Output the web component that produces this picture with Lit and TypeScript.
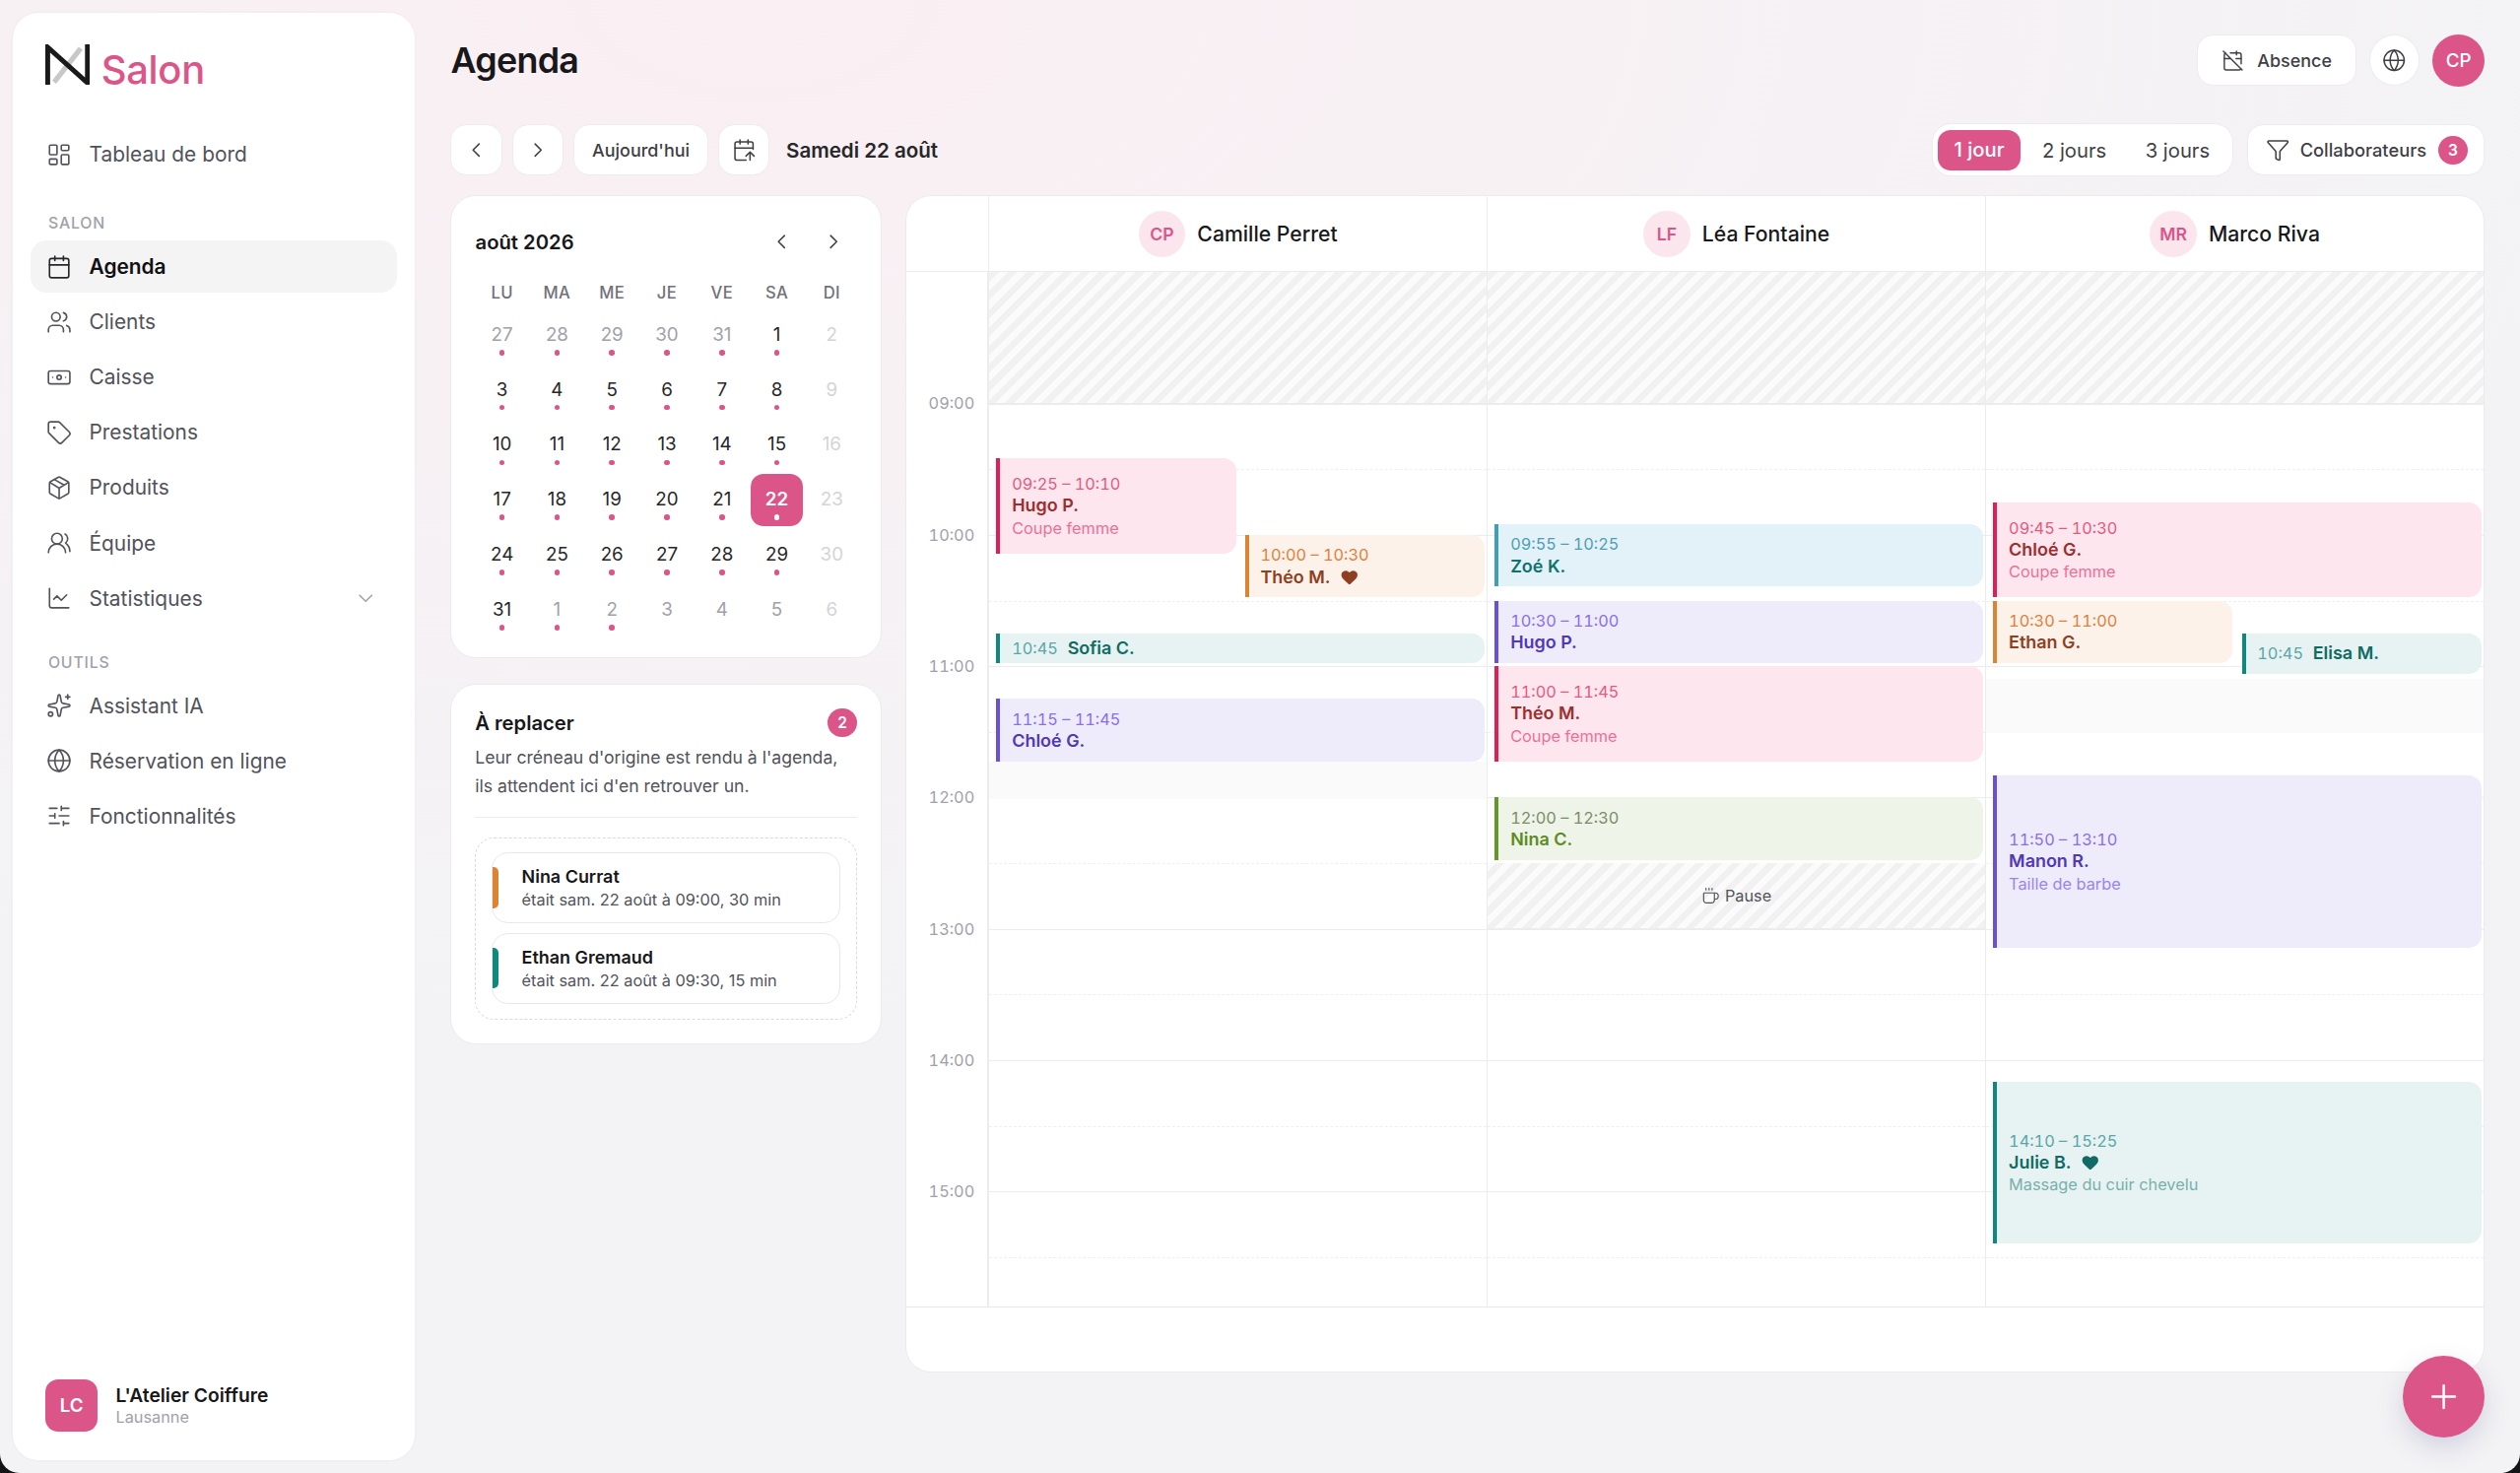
import { LitElement, html, css, svg } from "lit";
import { customElement } from "lit/decorators.js";

const ICONS: Record<string, any> = {
  dash: svg`<rect x="3" y="3" width="7" height="9" rx="1"/><rect x="14" y="3" width="7" height="5" rx="1"/><rect x="14" y="12" width="7" height="9" rx="1"/><rect x="3" y="16" width="7" height="5" rx="1"/>`,
  cal: svg`<path d="M8 2v4M16 2v4"/><rect x="3" y="4" width="18" height="18" rx="2"/><path d="M3 10h18"/>`,
  users: svg`<path d="M16 21v-2a4 4 0 0 0-4-4H6a4 4 0 0 0-4 4v2"/><circle cx="9" cy="7" r="4"/><path d="M22 21v-2a4 4 0 0 0-3-3.87M16 3.13a4 4 0 0 1 0 7.75"/>`,
  bank: svg`<rect x="2" y="6" width="20" height="12" rx="2"/><circle cx="12" cy="12" r="2"/><path d="M6 12h.01M18 12h.01"/>`,
  tag: svg`<path d="M12.586 2.586A2 2 0 0 0 11.172 2H4a2 2 0 0 0-2 2v7.172a2 2 0 0 0 .586 1.414l8.704 8.704a2.426 2.426 0 0 0 3.42 0l6.58-6.58a2.426 2.426 0 0 0 0-3.42z"/><circle cx="7.5" cy="7.5" r=".5"/>`,
  pkg: svg`<path d="M11 21.73a2 2 0 0 0 2 0l7-4A2 2 0 0 0 21 16V8a2 2 0 0 0-1-1.73l-7-4a2 2 0 0 0-2 0l-7 4A2 2 0 0 0 3 8v8a2 2 0 0 0 1 1.73z"/><path d="M12 22V12M3.3 7l7.703 4.734a2 2 0 0 0 1.994 0L20.7 7M7.5 4.27l9 5.15"/>`,
  team: svg`<path d="M18 21a8 8 0 0 0-16 0"/><circle cx="10" cy="8" r="5"/><path d="M22 20c0-3.37-2-6.5-4-8a5 5 0 0 0-.45-8.3"/>`,
  chart: svg`<path d="M3 3v16a2 2 0 0 0 2 2h16"/><path d="m19 9-5 5-4-4-3 3"/>`,
  spark: svg`<path d="M11.017 2.814a1 1 0 0 1 1.966 0l1.051 5.558a2 2 0 0 0 1.594 1.594l5.558 1.051a1 1 0 0 1 0 1.966l-5.558 1.051a2 2 0 0 0-1.594 1.594l-1.051 5.558a1 1 0 0 1-1.966 0l-1.051-5.558a2 2 0 0 0-1.594-1.594l-5.558-1.051a1 1 0 0 1 0-1.966l5.558-1.051a2 2 0 0 0 1.594-1.594z"/><path d="M20 2v4M22 4h-4"/><circle cx="4" cy="20" r="2"/>`,
  globe: svg`<circle cx="12" cy="12" r="10"/><path d="M12 2a14.5 14.5 0 0 0 0 20 14.5 14.5 0 0 0 0-20"/><path d="M2 12h20"/>`,
  sliders: svg`<path d="M10 5H3M12 19H3M14 3v4M16 17v4M21 12h-9M21 19h-5M21 5h-7M8 10v4M8 12H3"/>`,
  calOff: svg`<path d="M4.2 4.2A2 2 0 0 0 3 6v14a2 2 0 0 0 2 2h14a2 2 0 0 0 1.82-1.18"/><path d="M21 15.5V6a2 2 0 0 0-2-2H9.5"/><path d="M16 2v4M3 10h7M21 10h-5.5M2 2l20 20"/>`,
  calUp: svg`<path d="m14 18 4-4 4 4M16 2v4M18 22v-8"/><path d="M21 11.343V6a2 2 0 0 0-2-2H5a2 2 0 0 0-2 2v14a2 2 0 0 0 2 2h9"/><path d="M3 10h18M8 2v4"/>`,
  funnel: svg`<path d="M10 20a1 1 0 0 0 .553.895l2 1A1 1 0 0 0 14 21v-7a2 2 0 0 1 .517-1.341L21.74 4.67A1 1 0 0 0 21 3H3a1 1 0 0 0-.742 1.67l7.225 7.989A2 2 0 0 1 10 14z"/>`,
  coffee: svg`<path d="M10 2v2M14 2v2M6 2v2"/><path d="M16 8a1 1 0 0 1 1 1v8a4 4 0 0 1-4 4H7a4 4 0 0 1-4-4V9a1 1 0 0 1 1-1h14a4 4 0 1 1 0 8h-1"/>`,
  left: svg`<path d="m15 18-6-6 6-6"/>`,
  right: svg`<path d="m9 18 6-6-6-6"/>`,
  down: svg`<path d="m6 9 6 6 6-6"/>`,
  plus: svg`<path d="M5 12h14M12 5v14"/>`,
};
const icon = (n: string, size = 16, sw = 1.5) =>
  html`<svg class="ic" width=${size} height=${size} viewBox="0 0 24 24" fill="none" stroke="currentColor" stroke-width=${sw} stroke-linecap="round" stroke-linejoin="round">${ICONS[n]}</svg>`;
const heart = html`<svg class="heart" width="12" height="12" viewBox="0 0 24 24" fill="currentColor"><path d="M2 9.5a5.5 5.5 0 0 1 9.591-3.676.56.56 0 0 0 .818 0A5.49 5.49 0 0 1 22 9.5c0 2.29-1.5 4-3 5.5l-5.492 5.313a2 2 0 0 1-3 .019L5 15c-1.5-1.5-3-3.2-3-5.5"/></svg>`;

const PX_H = 81.7;
const Y0 = 8;
const yOf = (h: number, m: number) => (h + m / 60 - Y0) * PX_H;

type Ev = { c: string; s: [number, number]; e: [number, number]; lane?: 0 | 1 | 2; t: string; name: string; sub?: string; heart?: boolean; compact?: boolean };
const COLS: { ini: string; name: string; off: [number, number][]; pause?: boolean; evs: Ev[] }[] = [
  {
    ini: "CP", name: "Camille Perret", off: [[474, 497]],
    evs: [
      { c: "pink", s: [9, 25], e: [10, 10], lane: 1, t: "09:25 – 10:10", name: "Hugo P.", sub: "Coupe femme" },
      { c: "orange", s: [10, 0], e: [10, 30], lane: 2, t: "10:00 – 10:30", name: "Théo M.", heart: true },
      { c: "teal", s: [10, 45], e: [11, 0], t: "10:45", name: "Sofia C.", compact: true },
      { c: "violet", s: [11, 15], e: [11, 45], t: "11:15 – 11:45", name: "Chloé G." },
    ],
  },
  {
    ini: "LF", name: "Léa Fontaine", off: [], pause: true,
    evs: [
      { c: "blue", s: [9, 55], e: [10, 25], t: "09:55 – 10:25", name: "Zoé K." },
      { c: "violet", s: [10, 30], e: [11, 0], t: "10:30 – 11:00", name: "Hugo P." },
      { c: "pink", s: [11, 0], e: [11, 45], t: "11:00 – 11:45", name: "Théo M.", sub: "Coupe femme" },
      { c: "green", s: [12, 0], e: [12, 30], t: "12:00 – 12:30", name: "Nina C." },
    ],
  },
  {
    ini: "MR", name: "Marco Riva", off: [[422.5, 456]],
    evs: [
      { c: "pink", s: [9, 45], e: [10, 30], t: "09:45 – 10:30", name: "Chloé G.", sub: "Coupe femme" },
      { c: "orange", s: [10, 30], e: [11, 0], lane: 1, t: "10:30 – 11:00", name: "Ethan G." },
      { c: "teal", s: [10, 45], e: [11, 5], lane: 2, t: "10:45", name: "Elisa M.", compact: true },
      { c: "violet", s: [11, 50], e: [13, 10], t: "11:50 – 13:10", name: "Manon R.", sub: "Taille de barbe" },
      { c: "teal", s: [14, 10], e: [15, 25], t: "14:10 – 15:25", name: "Julie B.", sub: "Massage du cuir chevelu", heart: true },
    ],
  },
];

const NAV1: [string, string, boolean?][] = [
  ["cal", "Agenda", true], ["users", "Clients"], ["bank", "Caisse"], ["tag", "Prestations"], ["pkg", "Produits"], ["team", "Équipe"],
];
const NAV2: [string, string][] = [["spark", "Assistant IA"], ["globe", "Réservation en ligne"], ["sliders", "Fonctionnalités"]];

type Day = { d: number; k: "pre" | "cur" | "sun" | "sel" | "post"; dot: boolean };
const DAYS: Day[] = (() => {
  const out: Day[] = [];
  for (const d of [27, 28, 29, 30, 31]) out.push({ d, k: "pre", dot: true });
  for (let d = 1; d <= 31; d++) {
    const col = out.length % 7;
    if (col === 6) out.push({ d, k: "sun", dot: false });
    else out.push({ d, k: d === 22 ? "sel" : "cur", dot: true });
  }
  [1, 2, 3, 4, 5, 6].forEach((d, i) => out.push({ d, k: i === 5 ? "sun" : "post", dot: i < 2 }));
  return out;
})();

@customElement("app-root")
export class AppRoot extends LitElement {
  static styles = css`
    :host { display: block; width: 1568px; height: 916.4px; zoom: 1.63138; background: #141416; overflow: hidden;
      font-family: Inter, "Noto Sans", sans-serif; color: #18181b; }
    * { box-sizing: border-box; }
    .ic { flex: none; display: block; }
    .page { height: 100%; display: flex; gap: 22.4px; padding: 8px 22px 8px 8px; position: relative; border-radius: 0 0 12px 12px;
      background: radial-gradient(ellipse 75% 70% at 30% 0%, #faeff3 0%, #f7f1f4 45%, #f3f3f5 100%); overflow: hidden; }
    .side { width: 250px; flex: none; background: #fff; border-radius: 16px; display: flex; flex-direction: column; padding: 19.5px 11px 18px; box-shadow: 0 0 0 1px rgba(0,0,0,.015); }
    .logo { display: flex; align-items: flex-start; gap: 7px; padding-left: 9px; height: 27px; }
    .logo span { font-size: 24.5px; font-weight: 500; color: #dc5589; line-height: 29px; letter-spacing: -.2px; margin-top: 1.5px; }
    .nav { display: flex; flex-direction: column; gap: 2px; }
    .item { height: 32.4px; display: flex; align-items: center; gap: 10.5px; padding-left: 10px; padding-right: 12px; font-size: 12.8px; color: #52525b; border-radius: 10px; }
    .item.on { background: #f4f4f5; color: #111113; font-weight: 600; }
    .item.on .ic { color: #27272a; }
    .item .chev { margin-left: auto; color: #a1a1aa; }
    .nav.first { margin-top: 25.5px; }
    .lab { font-size: 9.7px; font-weight: 500; letter-spacing: .5px; color: #a1a1aa; padding-left: 11px; margin: 20.5px 0 4.8px; line-height: 12px; }
    .lab.b { margin-top: 18px; margin-bottom: 4.5px; }
    .foot { margin-top: auto; display: flex; align-items: center; gap: 11px; padding-left: 9px; }
    .av { width: 33px; height: 32px; border-radius: 8px; background: #dc5589; color: #fff; font-size: 11.5px; font-weight: 600; display: flex; align-items: center; justify-content: center; }
    .foot b { display: block; font-size: 11.8px; font-weight: 600; line-height: 15px; color: #18181b; }
    .foot small { display: block; font-size: 10px; color: #a1a1aa; line-height: 13px; }

    .main { flex: 1; min-width: 0; display: flex; flex-direction: column; }
    .top { display: flex; align-items: center; height: 46px; margin-top: 6.6px; }
    h1 { margin: 0; font-size: 22px; font-weight: 600; letter-spacing: -.45px; color: #18181b; }
    .top .sp { flex: 1; }
    .btn { height: 32px; background: #fff; border: 1px solid #ececef; border-radius: 10px; display: flex; align-items: center; justify-content: center; color: #3f3f46; font-size: 11px; font-weight: 500; }
    .sq { width: 32px; }
    .abs { width: 99.5px; gap: 8px; margin-right: 8px; }
    .glob { width: 31px; border-radius: 50%; margin-right: 8px; }
    .me { width: 32.6px; height: 32.6px; border-radius: 50%; background: #dc5589; color: #fff; font-size: 11.5px; font-weight: 500; display: flex; align-items: center; justify-content: center; }
    .bar { display: flex; align-items: center; gap: 6.2px; margin-top: 16.7px; height: 32px; }
    .today { width: 84px; }
    .date { margin-left: 4px; font-size: 12.6px; font-weight: 600; color: #27272a; }
    .seg { margin-left: auto; height: 33px; background: #fff; border: 1px solid #ececef; border-radius: 12px; display: flex; align-items: center; padding: 0 3px; width: 188px; margin-right: 2px; }
    .seg span { font-size: 12.4px; font-weight: 400; color: #3f3f46; text-align: center; }
    .seg .on { width: 52px; height: 25.3px; line-height: 25px; background: #dc5589; color: #fff; border-radius: 8px; font-weight: 500; }
    .seg .o { width: 66.5px; } .seg .o2 { width: 62px; }
    .coll { width: 148px; gap: 6.5px; justify-content: flex-start; padding-left: 11px; font-size: 11.2px; }
    .badge { width: 18px; height: 18px; border-radius: 50%; background: #dc5589; color: #fff; font-size: 9.5px; font-weight: 600; display: flex; align-items: center; justify-content: center; flex: none; }
    .coll .badge { margin-left: 1px; }

    .body { flex: 1; display: flex; gap: 15.2px; margin-top: 12.1px; min-height: 0; margin-bottom: 54.6px; }
    .left { width: 268px; flex: none; display: flex; flex-direction: column; gap: 16px; }
    .card { background: #fff; border: 1px solid #ebebee; border-radius: 16px; }
    .mini { height: 288.2px; padding: 0 14.3px; }
    .mh { display: flex; align-items: center; height: 53.5px; padding-left: .5px; padding-top: 3.5px; font-size: 12.4px; font-weight: 600; }
    .mh .sp { flex: 1; }
    .mh .a { color: #3f3f46; margin-right: 17px; }
    .mh .a2 { color: #3f3f46; margin-right: 7.5px; }
    .wd, .gr { display: grid; grid-template-columns: repeat(7, 34.2px); }
    .wd span { text-align: center; font-size: 10.2px; font-weight: 500; color: #71717a; line-height: 14px; letter-spacing: .2px; }
    .gr { margin-top: 2px; grid-auto-rows: 34.2px; }
    .d { position: relative; width: 32.4px; height: 32px; margin: 1px auto 0; display: flex; align-items: center; justify-content: center; font-size: 11.5px; line-height: 1; border-radius: 8px; color: #27272a; }
    .d.pre, .d.post { color: #a1a1aa; }
    .d.sun { color: #d4d4d8; }
    .d.sel { background: #dc5589; color: #fff; font-weight: 600; }
    .d i { position: absolute; left: 50%; bottom: 3.4px; margin-left: -1.7px; width: 3.4px; height: 3.4px; border-radius: 50%; background: #dc5589; }
    .d.sel i { background: #fff; }
    .rep { height: 224px; padding: 0 14.6px; }
    .rh { display: flex; align-items: center; justify-content: space-between; margin-top: 14.4px; height: 18px; font-size: 12.4px; font-weight: 600; }
    .rd { margin: 4.2px 0 0; font-size: 10.8px; line-height: 17.6px; color: #52525b; padding-bottom: 10px; border-bottom: 1px solid #ececef; }
    .drop { margin-top: 12.4px; height: 113.4px; border: 1px dashed #d9d9de; border-radius: 12px; padding: 8.8px 9.5px; display: flex; flex-direction: column; gap: 6px; }
    .ri { position: relative; height: 44px; border: 1px solid #e8e8eb; border-radius: 10px; padding-left: 18.3px; display: flex; flex-direction: column; justify-content: center; }
    .ri i { position: absolute; left: 0; top: 8.4px; width: 4px; height: 25.5px; border-radius: 0 3px 3px 0; }
    .ri b { font-size: 11px; font-weight: 600; line-height: 15.5px; color: #18181b; }
    .ri small { font-size: 10px; line-height: 14px; color: #52525b; }

    .grid { flex: 1; min-width: 0; position: relative; overflow: hidden; display: flex; flex-direction: column; }
    .hrow { display: flex; height: 47.4px; flex: none; border-bottom: 1px solid #ececef; }
    .tc { width: 50.8px; flex: none; }
    .hrow > div + div { border-left: 1px solid #ececef; }
    .ch { flex: 1; display: flex; align-items: center; justify-content: center; gap: 7.5px; font-size: 13px; font-weight: 500; color: #18181b; }
    .ch em { width: 29px; height: 29px; border-radius: 50%; background: #fce6ee; color: #dc5589; font-style: normal; font-size: 10.8px; font-weight: 600; display: flex; align-items: center; justify-content: center; }
    .brow { display: flex; height: 644px; flex: none; border-bottom: 1px solid #e8e8eb; overflow: hidden; }
    .times { position: relative; border-right: 1px solid #ececef; }
    .times span { position: absolute; right: 8px; font-size: 10px; line-height: 12px; color: #a1a1aa; margin-top: -5.6px; font-variant-numeric: tabular-nums; }
    .col { flex: 1; min-width: 0; position: relative; border-left: 1px solid #ececef; }
    .hl { position: absolute; left: 0; right: 0; height: 0; border-top: 1px solid #ececef; }
    .hl.dash { border-top: 1px dashed #efeff1; }
    .hatch { position: absolute; left: 0; right: 0; background: repeating-linear-gradient(-45deg, #f1f1f1 0 4px, #fbfbfb 4px 8px); border-bottom: 1px solid #ececef; display: flex; align-items: center; justify-content: center; gap: 3px; font-size: 10px; color: #52525b; }
    .off { position: absolute; left: 0; right: 0; background: #fafafa; }
    .ev { position: absolute; border-left: 2.8px solid; border-radius: 0 8px 8px 0; padding-left: 7.2px; display: flex; flex-direction: column; justify-content: center; font-size: 10px; line-height: 13.6px; overflow: hidden; }
    .ev .tm { font-variant-numeric: tabular-nums; }
    .ev .n { font-size: 11px; font-weight: 600; display: flex; align-items: center; }
    .ev .heart { margin-left: 6px; }
    .ev.cp { flex-direction: row; align-items: center; justify-content: flex-start; gap: 6px; }
    .pink { background: #fde6ee; border-color: #e11d55; color: #e35a80; } .pink .n { color: #9c2e2e; } .pink .su { color: #eb7096; }
    .orange { background: #fdf2e9; border-color: #dc8432; color: #e07f3d; } .orange .n { color: #8e3f22; }
    .teal { background: #e7f3f2; border-color: #0f887d; color: #5aa6a8; } .teal .n { color: #0f6b63; } .teal .su { color: #78b0ac; }
    .violet { background: #eeecfa; border-color: #6a50d8; color: #8a6fe6; } .violet .n { color: #5138b5; } .violet .su { color: #9a84ea; }
    .blue { background: #e3f1f9; border-color: #3e9fb6; color: #4f9fb2; } .blue .n { color: #0e736d; }
    .green { background: #eff4e8; border-color: #64962a; color: #7b8c6b; } .green .n { color: #5b8c23; }
    .fab { position: absolute; left: 1495px; top: 843.2px; width: 51px; height: 51px; border-radius: 50%; background: #dc5589; color: #fff; display: flex; align-items: center; justify-content: center; box-shadow: 0 6px 16px rgba(90,90,160,.22); }
  `;

  private logo() {
    return html`<svg width="28" height="25.5" viewBox="0 0 28 25.5" style="flex:none">
      <path d="M5.5 23.5 L22 2.5" stroke="#c8c8c8" stroke-width="3.2" fill="none"/>
      <path d="M1.5 25.5V1.8L26.2 24V0" stroke="#1a1a1a" stroke-width="3" fill="none"/>
    </svg>`;
  }

  private renderEv(ev: Ev) {
    const top = yOf(ev.s[0], ev.s[1]);
    const h = yOf(ev.e[0], ev.e[1]) - top - 2;
    const pos =
      ev.lane === 1 ? `left:4.4px;width:149px;` : ev.lane === 2 ? `left:159px;width:149.2px;` : `left:4.4px;right:1.6px;`;
    return html`<div class="ev ${ev.c} ${ev.compact ? "cp" : ""}" style="${pos}top:${top.toFixed(1)}px;height:${h.toFixed(1)}px">
      <div class="tm">${ev.t}</div>
      <div class="n">${ev.name}${ev.heart ? heart : ""}</div>
      ${ev.sub ? html`<div class="su">${ev.sub}</div>` : ""}
    </div>`;
  }

  private renderGrid() {
    const lines: any[] = [];
    for (let i = 1; i < 16; i++) {
      const y = i * (PX_H / 2);
      if (y > 644) continue;
      lines.push(html`<div class="hl ${i % 2 ? "dash" : ""}" style="top:${y.toFixed(1)}px"></div>`);
    }
    return html`<div class="card grid">
      <div class="hrow">
        <div class="tc"></div>
        ${COLS.map((c) => html`<div class="ch"><em>${c.ini}</em>${c.name}</div>`)}
      </div>
      <div class="brow">
        <div class="tc times">
          ${[9, 10, 11, 12, 13, 14, 15].map((h) => html`<span style="top:${yOf(h, 0).toFixed(1)}px">${String(h).padStart(2, "0")}:00</span>`)}
        </div>
        ${COLS.map(
          (c) => html`<div class="col">
            ${lines}
            ${c.off.map(([a, b]) => html`<div class="off" style="top:${a - 169.4}px;height:${b - a}px"></div>`)}
            <div class="hatch" style="top:0;height:${PX_H + 0.5}px"></div>
            ${c.pause
              ? html`<div class="hatch" style="top:${yOf(12, 30).toFixed(1)}px;height:${(PX_H / 2).toFixed(1)}px">${icon("coffee", 11.5)}Pause</div>`
              : ""}
            ${c.evs.map((e) => this.renderEv(e))}
          </div>`
        )}
      </div>
    </div>`;
  }

  render() {
    return html`<div class="page">
      <aside class="side">
        <div class="logo">${this.logo()}<span>Salon</span></div>
        <div class="nav first"><div class="item">${icon("dash")}Tableau de bord</div></div>
        <div class="lab">SALON</div>
        <div class="nav">
          ${NAV1.map(([i, t, on]) => html`<div class="item ${on ? "on" : ""}">${icon(i)}${t}</div>`)}
          <div class="item">${icon("chart")}Statistiques<span class="chev">${icon("down", 15)}</span></div>
        </div>
        <div class="lab b">OUTILS</div>
        <div class="nav">${NAV2.map(([i, t]) => html`<div class="item">${icon(i)}${t}</div>`)}</div>
        <div class="foot"><div class="av">LC</div><div><b>L'Atelier Coiffure</b><small>Lausanne</small></div></div>
      </aside>
      <main class="main">
        <div class="top">
          <h1>Agenda</h1><div class="sp"></div>
          <div class="btn abs">${icon("calOff", 14)}Absence</div>
          <div class="btn glob">${icon("globe", 15)}</div>
          <div class="me">CP</div>
        </div>
        <div class="bar">
          <div class="btn sq">${icon("left", 15)}</div>
          <div class="btn sq">${icon("right", 15)}</div>
          <div class="btn today">Aujourd'hui</div>
          <div class="btn sq">${icon("calUp", 15)}</div>
          <div class="date">Samedi 22 août</div>
          <div class="seg"><span class="on">1 jour</span><span class="o">2 jours</span><span class="o2">3 jours</span></div>
          <div class="btn coll">${icon("funnel", 15)}<span>Collaborateurs</span><span class="badge">3</span></div>
        </div>
        <div class="body">
          <div class="left">
            <div class="card mini">
              <div class="mh">août 2026<div class="sp"></div><span class="a">${icon("left", 15)}</span><span class="a2">${icon("right", 15)}</span></div>
              <div class="wd">${["LU", "MA", "ME", "JE", "VE", "SA", "DI"].map((d) => html`<span>${d}</span>`)}</div>
              <div class="gr">${DAYS.map((x) => html`<div class="d ${x.k}">${x.d}${x.dot ? html`<i></i>` : ""}</div>`)}</div>
            </div>
            <div class="card rep">
              <div class="rh">À replacer<span class="badge">2</span></div>
              <p class="rd">Leur créneau d'origine est rendu à l'agenda,<br />ils attendent ici d'en retrouver un.</p>
              <div class="drop">
                <div class="ri"><i style="background:#dd8433"></i><b>Nina Currat</b><small>était sam. 22 août à 09:00, 30 min</small></div>
                <div class="ri"><i style="background:#0f887d"></i><b>Ethan Gremaud</b><small>était sam. 22 août à 09:30, 15 min</small></div>
              </div>
            </div>
          </div>
          ${this.renderGrid()}
        </div>
      </main>
      <div class="fab">${icon("plus", 24)}</div>
    </div>`;
  }
}
